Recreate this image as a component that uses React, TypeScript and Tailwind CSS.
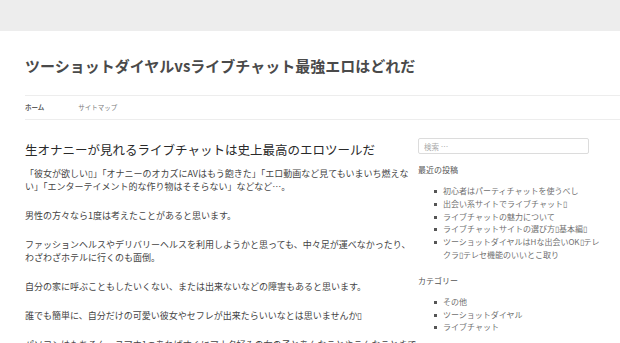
import React from 'react';

const recentPosts: string[][] = [
    ['初心者はパーティチャットを使うべし'],
    ['出会い系サイトでライブチャット▯'],
    ['ライブチャットの魅力について'],
    ['ライブチャットサイトの選び方▯基本編▯'],
    ['ツーショットダイヤルはHな出会いOK▯テレ', 'クラ▯テレセ機能のいいとこ取り'],
];

const categories: string[][] = [['その他'], ['ツーショットダイヤル'], ['ライブチャット']];

const WidgetList: React.FC<{ items: string[][] }> = ({ items }) => (
    <ul className="pl-[16px] text-[8px] leading-[12.8px] text-[#707070]">
        {items.map((lines, i) => (
            <li key={i} className="flex items-start gap-[6px] whitespace-nowrap">
                <span className="mt-[5px] h-[3px] w-[3px] flex-none bg-[#555]" />
                <span>
                    {lines.map((l, j) => (
                        <React.Fragment key={j}>
                            {j > 0 && <br />}
                            {l}
                        </React.Fragment>
                    ))}
                </span>
            </li>
        ))}
    </ul>
);

export default function App() {
    return (
        <div
            className="h-[343px] w-[620px] overflow-hidden bg-white"
            style={{ fontFamily: '"Noto Sans CJK JP", "Liberation Sans", sans-serif' }}
        >
            <div className="h-[31px] bg-[#ededed]" />

            <div className="pl-[25px]">
                <header className="pt-[25px]">
                    <h1 className="text-[15px] font-bold leading-[19px] text-[#4a4a4a]">
                        ツーショットダイヤルvsライブチャット最強エロはどれだ
                    </h1>
                    <nav className="mt-[20px] flex h-[25px] items-center border-y border-[#ededed] text-[6.5px]">
                        <a className="mr-[34px] font-bold text-[#5f5f5f]">ホーム</a>
                        <a className="text-[#7a7a7a]">サイトマップ</a>
                    </nav>
                </header>

                <div className="flex">
                    <main className="mr-[12px] w-[381px] flex-none pt-[22px] whitespace-nowrap">
                        <h2 className="text-[12.5px] leading-[16px] text-[#2a2a2a]">
                            生オナニーが見れるライブチャットは史上最高のエロツールだ
                        </h2>
                        <div className="mt-[9px] space-y-[16px] text-[9px] leading-[13px] text-[#444]">
                            <p>
                                「彼女が欲しい▯」「オナニーのオカズにAVはもう飽きた」「エロ動画など見てもいまいち燃えな
                                <br />
                                い」「エンターテイメント的な作り物はそそらない」などなど…。
                            </p>
                            <p>男性の方々なら1度は考えたことがあると思います。</p>
                            <p>
                                ファッションヘルスやデリバリーヘルスを利用しようかと思っても、中々足が運べなかったり、
                                <br />
                                わざわざホテルに行くのも面倒。
                            </p>
                            <p>自分の家に呼ぶこともしたいくない、または出来ないなどの障害もあると思います。</p>
                            <p>誰でも簡単に、自分だけの可愛い彼女やセフレが出来たらいいなとは思いませんか▯</p>
                            <p>パソコンはもちろん、スマホ1つあればすぐにアナタ好みの女の子とあんなことやこんなことまで</p>
                        </div>
                    </main>

                    <aside className="w-[171px] flex-none pt-[18px]">
                        <input
                            readOnly
                            placeholder="検索 …"
                            className="block h-[16px] w-full rounded-[2px] border border-[#dcdcdc] px-[5px] text-[7.5px] outline-none placeholder:text-[#aaa]"
                        />
                        <h3 className="mt-[9px] text-[8px] leading-[13px] text-[#555]">最近の投稿</h3>
                        <div className="mt-[9px]">
                            <WidgetList items={recentPosts} />
                        </div>
                        <h3 className="mt-[12px] text-[8px] leading-[13px] text-[#555]">カテゴリー</h3>
                        <div className="mt-[9px]">
                            <WidgetList items={categories} />
                        </div>
                    </aside>
                </div>
            </div>
        </div>
    );
}
